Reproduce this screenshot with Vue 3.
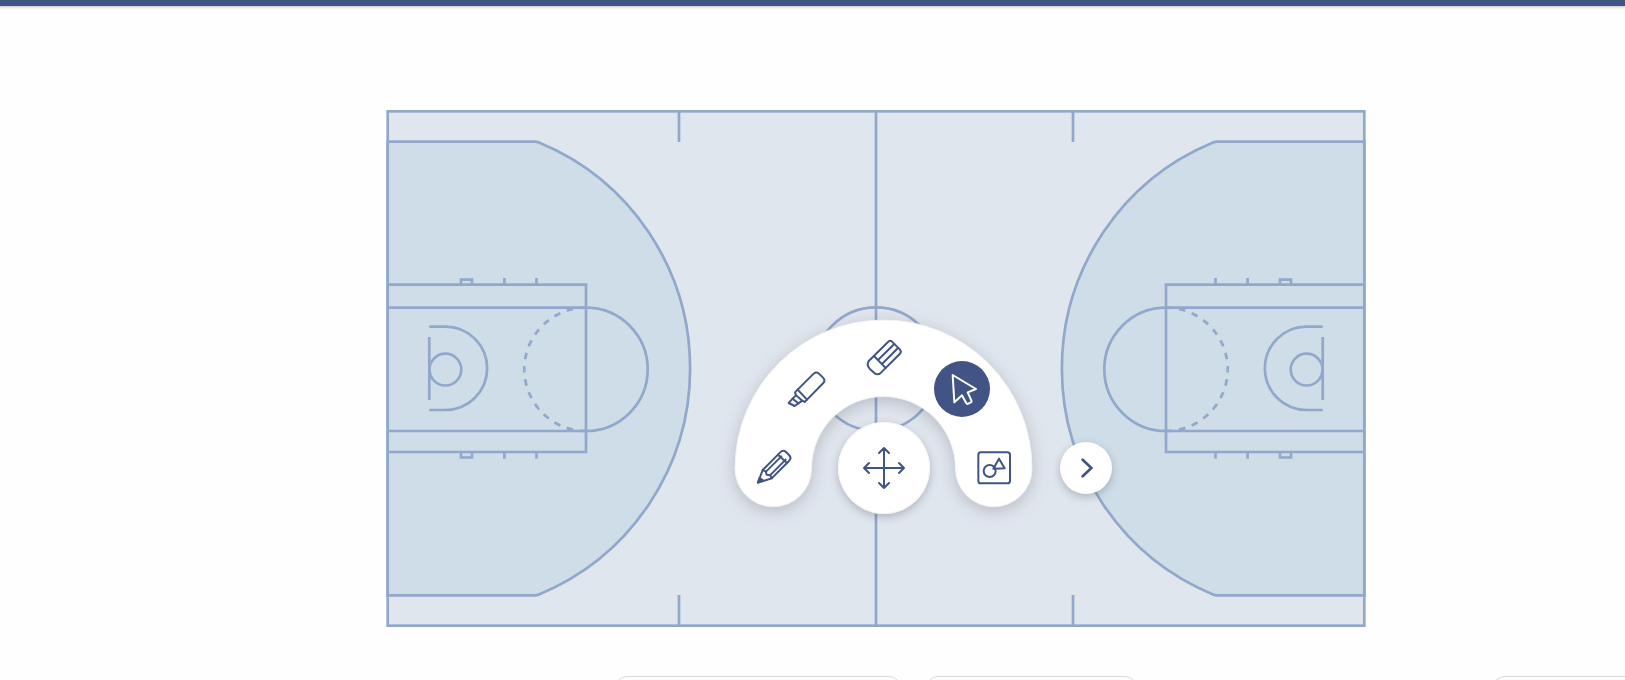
<script setup>
import { ref } from 'vue'

const active = ref('select')

const tools = [
  {
    id: 'pencil',
    label: 'Pencil',
    viewBox: '78 450 168 168',
    paths: [
      'M114 578 128 540 180 488Q189 478 198 486L207 495Q216 504 207 513L155 565Z',
      'M128 540 137 544 140 554 151 556 155 565',
      'M138 545 184 499M150 556 197 509M174 494 201 519'
    ],
    solid: 'M114 578 119 563 130 572Z'
  },
  {
    id: 'marker',
    label: 'Highlighter',
    viewBox: '174 213 168 168',
    paths: [
      'M233 299 281 251Q289 244 297 251L309 263Q317 272 310 279L261 329Z',
      'M233 299 225 307 228 316 218 326 206 339 224 348 235 340 247 332 254 336 261 329',
      'M218 326 235 340M228 316 247 332'
    ]
  },
  {
    id: 'eraser',
    label: 'Eraser',
    viewBox: '408 117 168 168',
    paths: [
      'M447 212 504 156Q510 149 516 155L540 179Q546 185 539 192L483 248Q473 257 463 249L449 236Q438 224 447 212Z',
      'M462 198 497 234M474 210 523 162M486 222 534 174'
    ]
  },
  {
    id: 'select',
    label: 'Select',
    viewBox: '103 214 168 168',
    paths: ['M159 256 229 298 204 308 215 332Q217 337 212 339L206 342Q201 344 199 339L187 317 164 338Z']
  },
  {
    id: 'shapes',
    label: 'Shapes',
    viewBox: '199 450 168 168',
    paths: [
      'M243 487H323Q331 487 331 495V572Q331 580 323 580H243Q236 580 236 572V495Q236 487 243 487Z',
      'M252 543A18 18 0 1 0 288 543A18 18 0 1 0 252 543Z',
      'M298 506 315 535 281 536Z'
    ]
  }
]
</script>

<template>
  <div class="page">
    <header class="topbar"></header>
    <main class="stage">
      <div class="board">
        <svg class="court" viewBox="386 110 980 517" role="img" aria-label="Basketball court">
          <rect class="floor" x="387.7" y="111.3" width="976.6" height="514.4" />
          <path d="M876 111V626" />
          <circle cx="876" cy="369" r="61.7" />
          <path d="M679 111V142M679 595V626M1073 111V142M1073 595V626" />
          <g v-for="side in 2" :key="side" :transform="side === 2 ? 'translate(1752 0) scale(-1 1)' : undefined">
            <path class="zone" d="M387.7 141.7H535Q537 141.7 539 142.6A244.4 244.4 0 0 1 539 594.4Q537 595.3 535 595.3H387.7Z" />
            <path d="M387.7 284.7H586V452H387.7M387.7 307.6H586M387.7 431H586" />
            <path d="M586 307.6A61.7 61.7 0 0 1 586 431" />
            <path class="dash" d="M524.3 369.3A61.7 61.7 0 0 1 586 307.6" />
            <path class="dash" d="M524.3 369.3A61.7 61.7 0 0 0 586 431" />
            <path d="M429.3 326.7H445.5A41.6 41.6 0 0 1 445.5 410H429.3M429.3 337V400" />
            <circle cx="445.4" cy="369.6" r="15.9" />
            <path d="M461 284.7V279.7H472V284.7M504.4 278V284.7M536.5 278V284.7" />
            <path d="M461 452V457.5H472V452M504.4 452V458.8M536.5 452V458.8" />
          </g>
        </svg>

        <div class="menu" role="toolbar" aria-label="Drawing tools">
          <svg class="arch" viewBox="0 0 297 187" aria-hidden="true">
            <path d="M0 148.500A148.500 148.500 0 0 1 297 148.500A38.250 38.250 0 0 1 220.500 148.500A72 72 0 0 0 76.500 148.500A38.250 38.250 0 0 1 0 148.500Z" />
          </svg>
          <button
            v-for="tool in tools"
            :key="tool.id"
            type="button"
            :class="['tool', tool.id, { active: active === tool.id }]"
            :aria-label="tool.label"
            :aria-pressed="active === tool.id"
            @click="active = tool.id"
          >
            <svg :viewBox="tool.viewBox" aria-hidden="true">
              <path v-for="d in tool.paths" :key="d" :d="d" />
              <path v-if="tool.solid" class="solid" :d="tool.solid" />
            </svg>
          </button>
          <button type="button" class="move" aria-label="Move menu">
            <svg viewBox="0 0 138 138" aria-hidden="true">
              <path d="M69 9V129M9 69H129M54 24 69 9 84 24M54 114 69 129 84 114M24 54 9 69 24 84M114 54 129 69 114 84" />
            </svg>
          </button>
          <button type="button" class="next" aria-label="Next">
            <svg viewBox="0 0 60 60" aria-hidden="true">
              <path d="M20 5 46 30 20 55" />
            </svg>
          </button>
        </div>
      </div>
    </main>
    <footer class="panels">
      <div class="panel wide"></div>
      <div class="panel"></div>
      <div class="panel edge"></div>
    </footer>
  </div>
</template>

<style>
body {
  margin: 0;
  background: #fefefe;
}
</style>

<style scoped>
.page {
  height: 100vh;
  overflow: hidden;
  display: flex;
  flex-direction: column;
  font-family: "Liberation Sans", sans-serif;
}
.topbar {
  flex: none;
  height: 6px;
  background: #425486;
  box-shadow: 0 0 3px 1px rgba(60, 40, 60, 0.3);
}
.stage {
  flex: none;
  display: flex;
  justify-content: center;
  padding: 104px 0 49px 127px;
}
.board {
  position: relative;
  flex: 0 1 980px;
}
.court {
  display: block;
  width: 100%;
  fill: none;
  stroke: #91a8cb;
  stroke-width: 2.7;
}
.floor {
  fill: #e0e6ee;
}
.zone {
  fill: #cfdde9;
}
.dash {
  stroke-dasharray: 6.6 6.8;
  stroke-dashoffset: 3.3;
}
.menu {
  position: absolute;
  left: calc(50% - 141px);
  top: 210px;
  width: 297px;
  height: 194px;
}
.arch {
  display: block;
  width: 297px;
  height: 187px;
  overflow: visible;
  fill: #fff;
  stroke: #f3f3f3;
  stroke-width: 1;
  filter: drop-shadow(0 4px 8px rgba(60, 65, 75, 0.25));
}
button {
  position: absolute;
  display: flex;
  align-items: center;
  justify-content: center;
  padding: 0;
  border: 0;
  border-radius: 50%;
  background: #fff;
  color: #425486;
  cursor: pointer;
}
button svg {
  fill: none;
  stroke: currentColor;
  stroke-width: 6;
  stroke-linecap: round;
  stroke-linejoin: round;
}
.tool {
  width: 56px;
  height: 56px;
  background: transparent;
}
.tool svg {
  width: 56px;
  height: 56px;
}
.solid {
  fill: currentColor;
}
.active {
  background: #425486;
  color: #fff;
}
.pencil {
  left: 11px;
  top: 120px;
}
.marker {
  left: 43px;
  top: 41px;
}
.eraser {
  left: 121px;
  top: 9px;
}
.select {
  left: 199px;
  top: 41px;
}
.shapes {
  left: 231px;
  top: 120px;
}
.move {
  left: 103px;
  top: 102px;
  width: 92px;
  height: 92px;
  box-shadow: 0 3px 8px rgba(60, 65, 75, 0.3), inset 0 0 0 1px #f3f3f3;
}
.move svg {
  width: 46px;
  height: 46px;
}
.next {
  left: 325px;
  top: 122px;
  width: 52px;
  height: 52px;
  box-shadow: 0 3px 8px rgba(60, 65, 75, 0.3);
}
.next svg {
  width: 20px;
  height: 20px;
  stroke-width: 8;
  stroke-linejoin: miter;
}
.panels {
  flex: none;
  display: flex;
  gap: 25px;
  padding-left: 615px;
}
.panel {
  box-sizing: border-box;
  width: 211px;
  height: 48px;
  border: 1px solid #d9d9d9;
  border-radius: 12px;
}
.wide {
  width: 286px;
}
.edge {
  width: 132px;
  margin-left: auto;
  border-right: 0;
  border-radius: 12px 0 0 0;
}
</style>
